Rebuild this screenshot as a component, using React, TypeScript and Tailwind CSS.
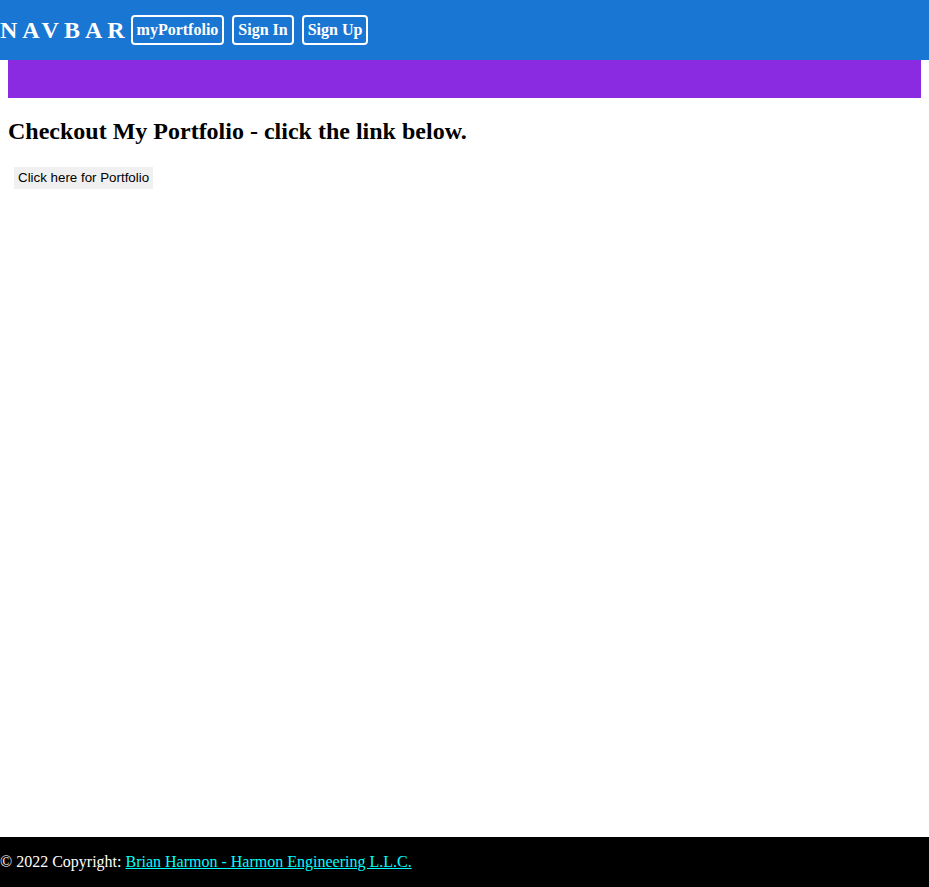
export default function App() {
  const serif = { fontFamily: '"Liberation Serif", "Times New Roman", serif' };
  return (
    <div className="flex min-h-screen flex-col bg-white" style={serif}>
      <nav className="flex h-[60px] items-center bg-[#1976d2]">
        <span className="mr-[1px] text-[24px] font-bold tracking-[5px] text-white">NAVBAR</span>
        <div className="flex items-center gap-2">
          <button className="rounded-[4px] border-2 border-white px-[4px] py-[4px] text-[16px] font-bold leading-[18px] text-white">myPortfolio</button>
          <button className="rounded-[4px] border-2 border-white px-[4px] py-[4px] text-[16px] font-bold leading-[18px] text-white">Sign In</button>
          <button className="rounded-[4px] border-2 border-white px-[4px] py-[4px] text-[16px] font-bold leading-[18px] text-white">Sign Up</button>
        </div>
      </nav>
      <div className="mx-2 h-[38px] bg-[#8a2be2]" />
      <main className="px-2">
        <h2 className="mt-5 mb-[22px] text-[24px] font-bold leading-[27px] text-black">Checkout My Portfolio - click the link below.</h2>
        <button
          className="ml-[6px] block bg-[#f0f0f0] px-1 py-[3px] text-[13.33px] leading-[16px] text-black"
          style={{ fontFamily: '"Liberation Sans", Arial, sans-serif' }}
        >
          Click here for Portfolio
        </button>
      </main>
      <footer className="mt-auto flex h-[50px] items-center bg-black text-[16px] text-white">
        <span>
          © 2022 Copyright:{" "}
          <a href="#" className="text-[#00ffff] underline">
            Brian Harmon - Harmon Engineering L.L.C.
          </a>
        </span>
      </footer>
    </div>
  );
}
